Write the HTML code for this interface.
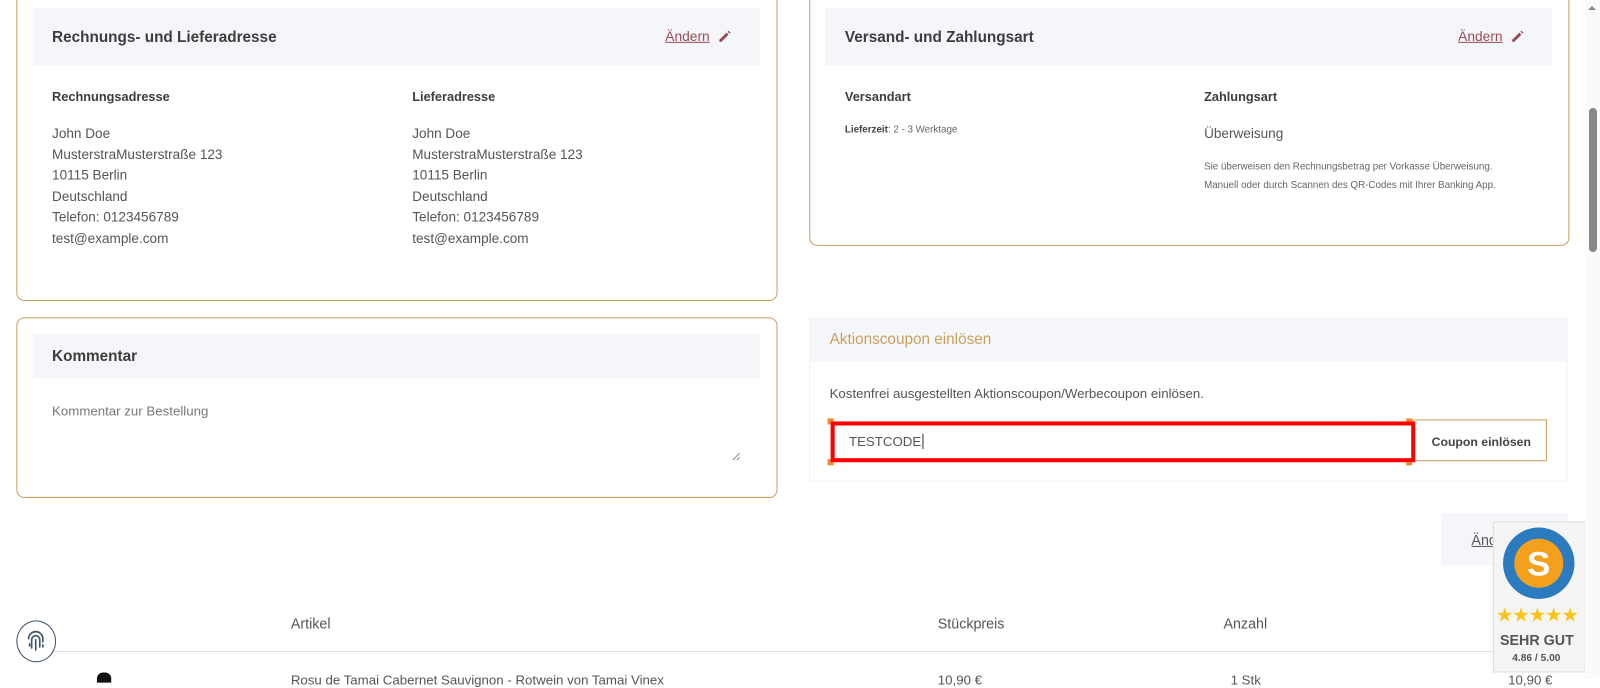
<!DOCTYPE html>
<html><head><meta charset="utf-8"><style>
html,body{margin:0;padding:0;width:1600px;height:679px;overflow:hidden;background:#fff;font-family:"Liberation Sans",sans-serif;color:#4a4a4a}
#w{position:absolute;left:0;top:0;width:1568px;height:665px;transform:scale(1.0204);transform-origin:0 0}
.a{position:absolute}
.box{position:absolute;border:1px solid #c9a15c;border-radius:8px;background:#fff}
.hd{position:absolute;background:#f5f6fa;font-weight:bold;font-size:15px;color:#3d3d3d}
.t{font-size:13.3px;line-height:20.6px;color:#555}
.b{font-weight:bold;font-size:12.5px;color:#3d3d3d}
.lnk{position:absolute;font-size:13.5px;color:#9a4b55;text-decoration:underline}
.s{font-size:9.6px;color:#666;line-height:18px}
</style></head><body><div id="w">
<div class="box" style="left:16px;top:-20px;width:744px;height:313px"></div>
<div class="hd" style="left:32px;top:8px;width:713px;height:56px"><span class="a" style="left:19px;top:20px">Rechnungs- und Lieferadresse</span></div>
<span class="lnk" style="left:652px;top:28px">Ändern</span>
<svg class="a" style="left:703px;top:29px" width="14" height="14" viewBox="0 0 14 14"><path d="M2 10l7-7 2 2-7 7H2z M10 2l1-1 2 2-1 1z" fill="#9a4b55"/></svg>
<div class="a b" style="left:51px;top:88px">Rechnungsadresse</div>
<div class="a t" style="left:51px;top:121px">John Doe<br>MusterstraMusterstraße 123<br>10115 Berlin<br>Deutschland<br>Telefon: 0123456789<br>test@example.com</div>
<div class="a b" style="left:404px;top:88px">Lieferadresse</div>
<div class="a t" style="left:404px;top:121px">John Doe<br>MusterstraMusterstraße 123<br>10115 Berlin<br>Deutschland<br>Telefon: 0123456789<br>test@example.com</div>

<div class="box" style="left:793px;top:-20px;width:743px;height:259px"></div>
<div class="hd" style="left:809px;top:8px;width:712px;height:56px"><span class="a" style="left:19px;top:20px">Versand- und Zahlungsart</span></div>
<span class="lnk" style="left:1429px;top:28px">Ändern</span>
<svg class="a" style="left:1480px;top:29px" width="14" height="14" viewBox="0 0 14 14"><path d="M2 10l7-7 2 2-7 7H2z M10 2l1-1 2 2-1 1z" fill="#9a4b55"/></svg>
<div class="a b" style="left:828px;top:88px">Versandart</div>
<div class="a s" style="left:828px;top:119px"><b style="color:#444">Lieferzeit</b>: 2 - 3 Werktage</div>
<div class="a b" style="left:1180px;top:88px">Zahlungsart</div>
<div class="a" style="left:1180px;top:123px;font-size:13.3px;color:#555">Überweisung</div>
<div class="a s" style="left:1180px;top:155px">Sie überweisen den Rechnungsbetrag per Vorkasse Überweisung.<br>Manuell oder durch Scannen des QR-Codes mit Ihrer Banking App.</div>

<div class="box" style="left:16px;top:311px;width:744px;height:175px"></div>
<div class="hd" style="left:32px;top:327px;width:713px;height:44px"><span class="a" style="left:19px;top:14px">Kommentar</span></div>
<div class="a" style="left:51px;top:395px;font-size:13px;color:#777">Kommentar zur Bestellung</div>
<svg class="a" style="left:717px;top:443px" width="9" height="9"><path d="M1 8L8 1M5 8L8 5" stroke="#888"/></svg>

<div class="a" style="left:793px;top:311px;width:743px;height:161px;border:1px solid #f0f0f2;box-sizing:border-box"></div>
<div class="a" style="left:793px;top:311px;width:743px;height:43px;background:#f5f6fa"><span class="a" style="left:20px;top:13px;font-size:15px;color:#c9a15c">Aktionscoupon einlösen</span></div>
<div class="a" style="left:813px;top:378px;font-size:13px;color:#555">Kostenfrei ausgestellten Aktionscoupon/Werbecoupon einlösen.</div>
<div class="a" style="left:1384px;top:411px;width:132px;height:41px;border:1px solid #c9a15c;box-sizing:border-box"></div>
<div class="a" style="left:1403px;top:426px;font-size:12px;font-weight:bold;color:#444">Coupon einlösen</div>
<div class="a" style="left:811px;top:410px;width:6px;height:6px;background:#f08a30"></div>
<div class="a" style="left:1378px;top:410px;width:6px;height:6px;background:#f08a30"></div>
<div class="a" style="left:811px;top:450px;width:6px;height:6px;background:#f08a30"></div>
<div class="a" style="left:1378px;top:450px;width:6px;height:6px;background:#f08a30"></div>
<div class="a" style="left:814px;top:413px;width:573px;height:40px;border:4px solid #ff0000;box-sizing:border-box;background:#fff"></div>
<div class="a" style="left:832px;top:425px;font-size:13px;color:#555">TESTCODE<span style="border-left:1px solid #333;margin-left:1px"></span></div>

<div class="a" style="left:1412px;top:503px;width:125px;height:51px;background:#f5f6fa"><span class="a" style="left:30px;top:18px;font-size:14px;color:#555;text-decoration:underline">Änd</span></div>

<div class="a" style="left:285px;top:603px;font-size:14px;color:#555">Artikel</div>
<div class="a" style="left:919px;top:603px;font-size:14px;color:#555">Stückpreis</div>
<div class="a" style="left:1199px;top:603px;font-size:14px;color:#555">Anzahl</div>
<div class="a" style="left:40px;top:638px;width:1520px;height:1px;background:#e2e2e2"></div>
<div class="a" style="left:285px;top:659px;font-size:13px;color:#555">Rosu de Tamai Cabernet Sauvignon - Rotwein von Tamai Vinex</div>
<div class="a" style="left:919px;top:659px;font-size:13px;color:#555">10,90 €</div>
<div class="a" style="left:1206px;top:659px;font-size:13px;color:#555">1 Stk</div>
<div class="a" style="left:95px;top:659px;width:14px;height:10px;background:#111;border-radius:6px 6px 0 0"></div>
<div class="a" style="left:1478px;top:659px;font-size:13px;color:#555">10,90 €</div>

<div class="a" style="left:16px;top:608px;width:37px;height:39px;border:1px solid #3d5468;border-radius:50%;background:#fff"></div>
<svg class="a" style="left:24px;top:617px" width="22" height="22" viewBox="0 0 22 22" fill="none" stroke="#3d5468" stroke-width="1.6" stroke-linecap="round"><path d="M4 9a7 7 0 0 1 14 0v3M7 18v-8a4 4 0 0 1 8 0v7M11 10v10M5 14v2M18 15v2"/></svg>

<div class="a" style="left:1463px;top:511px;width:91px;height:148px;background:#f5f5f5;border:1px solid #ddd;box-sizing:border-box"></div>
<svg class="a" style="left:1472px;top:516px" width="72" height="72" viewBox="0 0 72 72"><circle cx="36" cy="36" r="35" fill="#2d7bbf"/><circle cx="36" cy="36" r="24" fill="#f4a01c"/><text x="36" y="48" text-anchor="middle" font-family="Liberation Sans" font-weight="bold" font-size="34" fill="#fff">S</text></svg>
<div class="a" style="left:1466px;top:592px;font-size:19px;color:#f8c512;letter-spacing:-1px">★★★★★</div>
<div class="a" style="left:1470px;top:619px;font-size:14px;font-weight:bold;color:#555">SEHR GUT</div>
<div class="a" style="left:1482px;top:640px;font-size:10px;font-weight:bold;color:#555">4.86 / 5.00</div>
</div>
<div class="a" style="left:1585px;top:0;width:15px;height:679px;background:#fafafa"></div>
<div class="a" style="left:1589px;top:108px;width:8px;height:144px;background:#888;border-radius:4px"></div>
<div class="a" style="left:1588px;top:6px;width:0;height:0;border-left:4px solid transparent;border-right:4px solid transparent;border-bottom:4px solid #888"></div>
</body></html>
